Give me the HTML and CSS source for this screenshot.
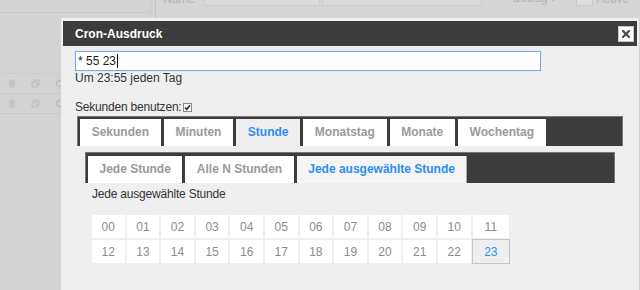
FILE: index.html
```html
<!DOCTYPE html>
<html lang="de">
<head>
<meta charset="utf-8">
<title>Cron-Ausdruck</title>
<link rel="stylesheet" href="styles.css">
</head>
<body>
<div class="page">
  <aside class="side">
    <div class="side-head"></div>
    <div class="side-space"></div>
    <div class="side-row first">
      <span class="cell"><svg width="8" height="9" viewBox="0 0 8 9"><path d="M1 2h6M3 1h2M2 2v6h4V2M3.5 3.5v3M4.5 3.5v3" fill="none" stroke="#bdbdbd" stroke-width="1"/></svg></span>
      <span class="cell"><svg width="9" height="9" viewBox="0 0 9 9"><path d="M1 3h5v5H1zM3 3V1h5v5H6" fill="none" stroke="#bdbdbd" stroke-width="1"/></svg></span>
      <span class="cell"><svg width="9" height="9" viewBox="0 0 9 9"><circle cx="4.5" cy="4.5" r="3" fill="none" stroke="#bdbdbd" stroke-width="1.4"/></svg></span>
    </div>
    <div class="side-row">
      <span class="cell"><svg width="8" height="9" viewBox="0 0 8 9"><path d="M1 2h6M3 1h2M2 2v6h4V2M3.5 3.5v3M4.5 3.5v3" fill="none" stroke="#bdbdbd" stroke-width="1"/></svg></span>
      <span class="cell"><svg width="9" height="9" viewBox="0 0 9 9"><path d="M1 3h5v5H1zM3 3V1h5v5H6" fill="none" stroke="#bdbdbd" stroke-width="1"/></svg></span>
      <span class="cell"><svg width="9" height="9" viewBox="0 0 9 9"><circle cx="4.5" cy="4.5" r="3" fill="none" stroke="#bdbdbd" stroke-width="1.4"/></svg></span>
    </div>
  </aside>
  <main class="form">
    <div class="form-row">
      <span class="lbl name-lbl">Name</span>
      <span class="fld fld-name">Gewächshaus</span>
      <span class="fld fld-desc">LED schalten</span>
      <span class="lbl debug">Debug <span class="arrow">▾</span></span>
      <span class="fake-check"></span>
      <span class="lbl">Is Active</span>
    </div>
  </main>
</div>

<div class="dialog">
  <div class="titlebar">
    <span class="title">Cron-Ausdruck</span>
    <span class="close"><svg width="8" height="8" viewBox="0 0 8 8"><path d="M1 1L7 7M7 1L1 7" stroke="#4a4a4a" stroke-width="2.2" stroke-linecap="square"/></svg></span>
  </div>
  <div class="content">
    <div class="cron-input">* 55 23<span class="caret"></span></div>
    <div class="desc">Um 23:55 jeden Tag</div>
    <div class="sec-row">Sekunden benutzen:<span class="check"><svg width="7" height="7" viewBox="0 0 7 7"><path d="M1 3.5L2.8 5.3L6 1.3" fill="none" stroke="#222" stroke-width="1.5"/></svg></span></div>
    <div class="tabs">
      <span class="tab">Sekunden</span>
      <span class="tab">Minuten</span>
      <span class="tab active">Stunde</span>
      <span class="tab">Monatstag</span>
      <span class="tab">Monate</span>
      <span class="tab">Wochentag</span>
    </div>
    <div class="panel">
      <div class="tabs sub">
        <span class="tab">Jede Stunde</span>
        <span class="tab">Alle N Stunden</span>
        <span class="tab active sub-active">Jede ausgewählte Stunde</span>
      </div>
      <div class="subpanel">
        <div class="subpanel-title">Jede ausgewählte Stunde</div>
        <div class="hours">
          <span class="hour">00</span><span class="hour">01</span><span class="hour">02</span><span class="hour">03</span><span class="hour">04</span><span class="hour">05</span><span class="hour">06</span><span class="hour">07</span><span class="hour">08</span><span class="hour">09</span><span class="hour">10</span><span class="hour">11</span>
          <span class="hour">12</span><span class="hour">13</span><span class="hour">14</span><span class="hour">15</span><span class="hour">16</span><span class="hour">17</span><span class="hour">18</span><span class="hour">19</span><span class="hour">20</span><span class="hour">21</span><span class="hour">22</span><span class="hour selected">23</span>
        </div>
      </div>
    </div>
  </div>
</div>
</body>
</html>
```

FILE: styles.css
```css
html, body {
  margin: 0;
  padding: 0;
}
body {
  width: 640px;
  height: 290px;
  overflow: hidden;
  position: relative;
  background: #d3d3d3;
  font-family: "Liberation Sans", Arial, sans-serif;
  font-size: 12px;
  color: #333;
}

/* background page (dimmed by the modal) */
.page {
  display: flex;
  height: 290px;
}
.side {
  width: 150px;
  border-right: 1px solid #cacaca;
}
.side-head {
  height: 12px;
  border-bottom: 1px solid #c9c9c9;
}
.side-space {
  height: 60px;
}
.side-row {
  display: flex;
  height: 19px;
  border-top: 1px solid #cacaca;
}
.side-row.first {
  border-top-color: #c4ccd5;
}
.side-row + .side-row {
  border-bottom: 1px solid #cacaca;
}
.side-row .cell {
  width: 23px;
  border-right: 1px solid #cdd2d7;
  display: flex;
  align-items: center;
  justify-content: center;
}
.form {
  flex: 1;
  margin-left: 4px;
  border-left: 1px solid #c3c3c3;
  background: #d5d5d5;
}
.form-row {
  display: flex;
  align-items: flex-end;
  height: 20px;
  margin-top: -14px;
  padding-left: 7px;
  color: #b4b4b4;
  line-height: 14px;
}
.name-lbl {
  width: 42px;
}
.fld {
  box-sizing: border-box;
  height: 20px;
  border: 1px solid #cbcbcb;
  background: #dadada;
  padding: 0 4px;
  line-height: 18px;
  color: #b9b9b9;
}
.fld-name {
  width: 119px;
}
.fld-desc {
  width: 164px;
  margin-left: 2px;
}
.debug {
  margin-left: 30px;
  width: 65px;
}
.arrow {
  font-size: 9px;
}
.fake-check {
  width: 18px;
  height: 12px;
  background: #dedede;
  border: 1px solid #cbcbcb;
  box-sizing: border-box;
  margin-right: 3px;
}

/* dialog */
.dialog {
  position: absolute;
  left: 61px;
  top: 18px;
  width: 574px;
  height: 272px;
  padding: 3px 2px 0;
  background: #efefef;
}
.titlebar {
  height: 25px;
  background: #3c3c3c;
  display: flex;
  align-items: center;
  justify-content: space-between;
  padding: 0 3px 0 12px;
}
.title {
  color: #fff;
  font-weight: bold;
  font-size: 12px;
}
.close {
  width: 16px;
  height: 16px;
  box-sizing: border-box;
  background: #fff;
  border: 1px solid #c8c8c8;
  display: flex;
  align-items: center;
  justify-content: center;
}
.content {
  padding: 5px 12px 0;
}
.cron-input {
  width: 466px;
  height: 20px;
  box-sizing: border-box;
  border: 1px solid #80a8e6;
  box-shadow: 0 0 1px #a9c4ef;
  background: #fff;
  padding: 0 2px;
  line-height: 18px;
  color: #222;
  display: flex;
  align-items: center;
}
.caret {
  display: inline-block;
  width: 1px;
  height: 14px;
  background: #111;
  margin-left: 1px;
}
.desc {
  line-height: 14px;
}
.sec-row {
  margin-top: 15px;
  line-height: 14px;
  display: flex;
  align-items: center;
  letter-spacing: -0.2px;
}
.check {
  width: 9px;
  height: 9px;
  box-sizing: border-box;
  border: 1px solid #8a8a8a;
  background: #fff;
  margin-left: 1px;
  margin-top: 1px;
  display: flex;
  align-items: center;
  justify-content: center;
}

/* tabs */
.tabs {
  margin: 2px 0 0 2px;
  width: 546px;
  height: 30px;
  box-sizing: border-box;
  border: 1px solid #777;
  border-bottom: 0;
  background: #3c3c3c;
  display: flex;
  gap: 3px;
  padding: 2px 0 0 2px;
}
.tab {
  height: 27px;
  line-height: 27px;
  padding: 0 11.7px;
  background: #fff;
  color: #9a9a9a;
  font-weight: bold;
  white-space: nowrap;
}
.tab.active {
  background: #efefef;
  color: #2b8ef2;
}
.panel {
  padding: 6px 0 0 10px;
}
.tabs.sub {
  margin: 0;
  width: 530px;
  height: 31px;
  padding: 3px 0 0 2px;
}
.tabs.sub .tab {
  padding: 0 11.5px;
}
.tab.sub-active {
  background: #f5f5f5;
  border-right: 1px solid #a8a8a8;
}
.subpanel {
  padding: 4px 0 0 7px;
}
.subpanel-title {
  line-height: 14px;
  letter-spacing: -0.2px;
}
.hours {
  margin-top: 14px;
  display: grid;
  grid-template-columns: repeat(11, 32.6px) 36.6px;
  grid-auto-rows: 23px;
  gap: 2px;
}
.hour {
  background: #fff;
  color: #8c8c8c;
  display: flex;
  align-items: center;
  justify-content: center;
  font-size: 12px;
}
.hour.selected {
  background: #efefef;
  box-shadow: 0 0 0 1px #c4c4c4;
  color: #2b8ef2;
}
```
